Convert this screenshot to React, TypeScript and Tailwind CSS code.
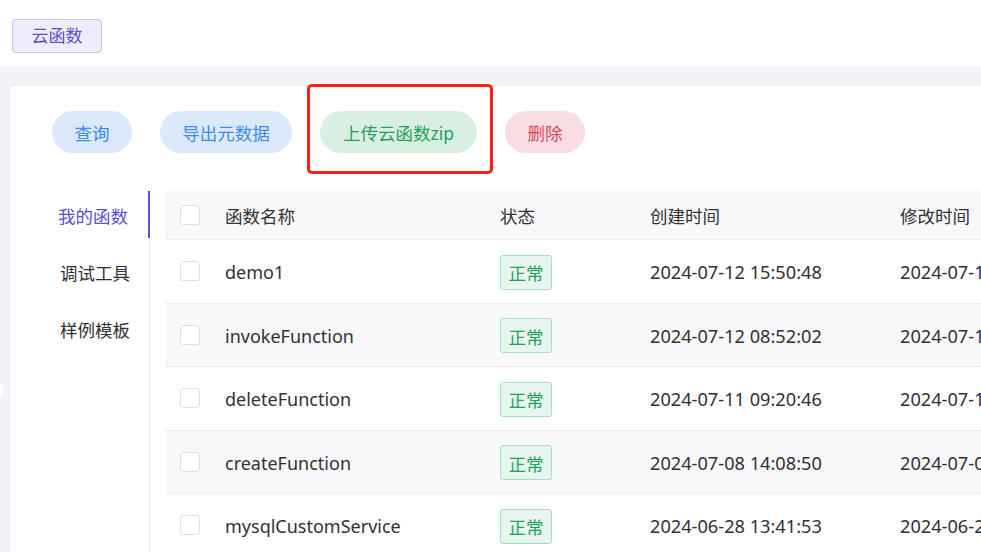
import React from "react";

const rows = [
  { name: "demo1", created: "2024-07-12 15:50:48", modified: "2024-07-12 15:50:48" },
  { name: "invokeFunction", created: "2024-07-12 08:52:02", modified: "2024-07-12 08:52:02" },
  { name: "deleteFunction", created: "2024-07-11 09:20:46", modified: "2024-07-11 09:20:46" },
  { name: "createFunction", created: "2024-07-08 14:08:50", modified: "2024-07-08 14:08:50" },
  { name: "mysqlCustomService", created: "2024-06-28 13:41:53", modified: "2024-06-28 13:41:53" },
];

const Checkbox = () => (
  <span className="block w-[20px] h-[20px] rounded-[3px] border border-[#dcdfe6] bg-white" />
);

const App = () => {
  return (
    <div className="relative w-[981px] h-[552px] overflow-hidden bg-[#f3f4f9] font-['Noto_Sans','Noto_Sans_CJK_SC',sans-serif] text-[#303133]">
      {/* top bar */}
      <div className="h-[67px] bg-white pl-[12px] pt-[19px]">
        <span className="inline-flex items-center justify-center h-[34px] w-[90px] rounded-[4px] border border-[#c6bff0] bg-[#efecfb] text-[17px] text-[#5a4fd0]">
          云函数
        </span>
      </div>

      <div className="pt-[18px] pl-[9px]">
        <div className="h-[500px] bg-white rounded-tl-[4px] border-l border-t border-[#eceef4]">
          {/* buttons */}
          <div className="flex gap-[28px] pl-[42px] pt-[25px]">
            <button className="h-[42px] w-[80px] rounded-full bg-[#dbe9fb] text-[17.5px] text-[#3b8cf0] pt-[2px]">查询</button>
            <button className="h-[42px] w-[132px] rounded-full bg-[#dbe9fb] text-[17.5px] text-[#3b8cf0] pt-[2px]">导出元数据</button>
            <button className="h-[42px] w-[157px] rounded-full bg-[#d9efe2] text-[17.5px] text-[#1fa35b] pt-[2px]">上传云函数zip</button>
            <button className="h-[42px] w-[80px] rounded-full bg-[#f9dde3] text-[17.5px] text-[#e0475b] pt-[2px]">删除</button>
          </div>

          {/* tabs + table */}
          <div className="flex mt-[38px]">
            <div className="w-[140px] shrink-0 border-r border-[#e6e8ee] h-[400px]">
              <div className="h-[47px] flex items-center justify-end pr-[20px] pt-[3px] text-[17.5px] text-[#5a4fd0] border-r-2 border-[#5a4fd0] -mr-px">
                我的函数
              </div>
              <div className="h-[47px] mt-[10px] flex items-center justify-end pr-[19px] pt-[3px] text-[17.5px]">调试工具</div>
              <div className="h-[47px] mt-[10px] flex items-center justify-end pr-[19px] pt-[3px] text-[17.5px]">样例模板</div>
            </div>

            <div className="ml-[15px] w-[900px] shrink-0 text-[17.5px]">
              <div className="flex items-center h-[49px] pt-[2px] bg-[#f8f8fb] border-b border-[#ebedf2]">
                <div className="w-[60px] shrink-0 pl-[15px] -mt-[2px]"><Checkbox /></div>
                <div className="w-[275px] shrink-0">函数名称</div>
                <div className="w-[150px] shrink-0">状态</div>
                <div className="w-[250px] shrink-0">创建时间</div>
                <div className="shrink-0">修改时间</div>
              </div>
              {rows.map((r, i) => (
                <div
                  key={r.name}
                  className={`flex items-center h-[63.5px] border-b border-[#ebedf2] ${i % 2 === 1 ? "bg-[#f9f9fb]" : "bg-white"}`}
                >
                  <div className="w-[60px] shrink-0 pl-[15px]"><Checkbox /></div>
                  <div className="w-[275px] shrink-0 text-[18px] pt-[3px]">{r.name}</div>
                  <div className="w-[150px] shrink-0 pt-[2px]">
                    <span className="inline-flex items-center justify-center w-[52px] h-[35px] pt-[2px] rounded-[3px] border border-[#a9e0c1] bg-[#e7f6ee] text-[#1fa35b]">
                      正常
                    </span>
                  </div>
                  <div className="w-[250px] shrink-0 text-[18.2px] pt-[3px]">{r.created}</div>
                  <div className="shrink-0 whitespace-nowrap text-[18.2px] pt-[3px]">{r.modified}</div>
                </div>
              ))}
            </div>
          </div>
        </div>
      </div>

      {/* collapse handle peeking from the left edge */}
      <div className="absolute left-[-17px] top-[380px] w-[20px] h-[20px] rounded-full bg-white" />

      {/* red annotation box */}
      <div className="absolute left-[307px] top-[84px] w-[186px] h-[90px] border-[3px] border-[#ff2015] rounded-[5px]" />
    </div>
  );
};

export default App;
